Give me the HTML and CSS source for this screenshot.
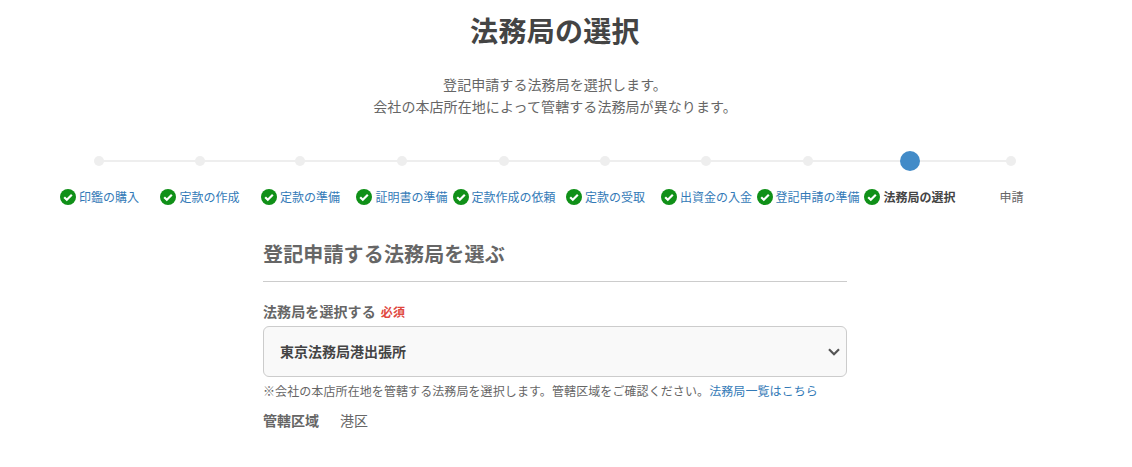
FILE: index.html
```html
<!DOCTYPE html>
<html lang="ja">
<head>
    <meta charset="UTF-8">
    <meta name="viewport" content="width=device-width, initial-scale=1.0">
    <title>法務局の選択</title>
    <link rel="stylesheet" href="styles.css">
</head>
<body>
    <main class="page">
        <h1 class="page-title">法務局の選択</h1>
        <p class="page-lead">登記申請する法務局を選択します。<br>会社の本店所在地によって管轄する法務局が異なります。</p>

        <ol class="steps">
            <li class="step done"><span class="dot"></span><a class="step-label" href="#"><svg class="check" viewBox="0 0 16 16"><circle cx="8" cy="8" r="8"/><path d="M4.2 8.3l2.6 2.5 5-5"/></svg>印鑑の購入</a></li>
            <li class="step done"><span class="dot"></span><a class="step-label" href="#"><svg class="check" viewBox="0 0 16 16"><circle cx="8" cy="8" r="8"/><path d="M4.2 8.3l2.6 2.5 5-5"/></svg>定款の作成</a></li>
            <li class="step done"><span class="dot"></span><a class="step-label" href="#"><svg class="check" viewBox="0 0 16 16"><circle cx="8" cy="8" r="8"/><path d="M4.2 8.3l2.6 2.5 5-5"/></svg>定款の準備</a></li>
            <li class="step done"><span class="dot"></span><a class="step-label" href="#"><svg class="check" viewBox="0 0 16 16"><circle cx="8" cy="8" r="8"/><path d="M4.2 8.3l2.6 2.5 5-5"/></svg>証明書の準備</a></li>
            <li class="step done"><span class="dot"></span><a class="step-label" href="#"><svg class="check" viewBox="0 0 16 16"><circle cx="8" cy="8" r="8"/><path d="M4.2 8.3l2.6 2.5 5-5"/></svg>定款作成の依頼</a></li>
            <li class="step done"><span class="dot"></span><a class="step-label" href="#"><svg class="check" viewBox="0 0 16 16"><circle cx="8" cy="8" r="8"/><path d="M4.2 8.3l2.6 2.5 5-5"/></svg>定款の受取</a></li>
            <li class="step done"><span class="dot"></span><a class="step-label" href="#"><svg class="check" viewBox="0 0 16 16"><circle cx="8" cy="8" r="8"/><path d="M4.2 8.3l2.6 2.5 5-5"/></svg>出資金の入金</a></li>
            <li class="step done"><span class="dot"></span><a class="step-label" href="#"><svg class="check" viewBox="0 0 16 16"><circle cx="8" cy="8" r="8"/><path d="M4.2 8.3l2.6 2.5 5-5"/></svg>登記申請の準備</a></li>
            <li class="step current"><span class="dot"></span><span class="step-label"><svg class="check" viewBox="0 0 16 16"><circle cx="8" cy="8" r="8"/><path d="M4.2 8.3l2.6 2.5 5-5"/></svg>法務局の選択</span></li>
            <li class="step"><span class="dot"></span><span class="step-label">申請</span></li>
        </ol>

        <section class="office-form">
            <h2 class="form-title">登記申請する法務局を選ぶ</h2>
            <div class="form-group">
                <label class="form-label" for="office">法務局を選択する<span class="required">必須</span></label>
                <div class="select-wrap">
                    <select id="office">
                        <option>東京法務局港出張所</option>
                    </select>
                    <svg class="chevron" viewBox="0 0 12 8"><path d="M1 1.2l5 5 5-5"/></svg>
                </div>
                <p class="note">※会社の本店所在地を管轄する法務局を選択します。管轄区域をご確認ください。<a href="#">法務局一覧はこちら</a></p>
            </div>
            <dl class="area">
                <dt>管轄区域</dt>
                <dd>港区</dd>
            </dl>
        </section>
    </main>
</body>
</html>
```

FILE: styles.css
```css
body {
    margin: 0;
    background-color: #fff;
    color: #666;
    font-family: "Noto Sans CJK JP", "Noto Sans", sans-serif;
    font-size: 14px;
}
a {
    color: #337ab7;
    text-decoration: none;
}
.page {
    width: 1110px;
    padding-top: 9px;
}
.page-title {
    margin: 0;
    color: #444;
    font-size: 28px;
    letter-spacing: 0.3px;
    line-height: 42px;
    text-align: center;
}
.page-lead {
    margin: 22px 0 0;
    letter-spacing: 0.08px;
    line-height: 22px;
    text-align: center;
}
.steps {
    display: grid;
    grid-template-columns: 101px 100px 101px 102px 102px 101px 101px 102px 102px 101px;
    justify-content: center;
    margin: 33px 0 0;
    padding: 0;
    list-style: none;
}
.step {
    position: relative;
    display: flex;
    flex-direction: column;
    align-items: center;
}
.step::before {
    content: "";
    position: absolute;
    top: 10px;
    left: 50%;
    width: 100%;
    height: 2px;
    background-color: #eee;
}
.step:last-child::before {
    display: none;
}
.dot {
    position: relative;
    width: 10px;
    height: 10px;
    margin: 6px 0;
    border-radius: 50%;
    background-color: #eee;
}
.current .dot {
    width: 20px;
    height: 20px;
    margin: 1px 0;
    background-color: #428bc8;
}
.step-label {
    display: flex;
    align-items: center;
    margin-top: 16px;
    margin-left: 1px;
    font-size: 12px;
    line-height: 18px;
    white-space: nowrap;
}
.current .step-label {
    color: #444;
    font-weight: bold;
}
.check {
    flex: none;
    width: 16px;
    height: 16px;
    margin-right: 3px;
}
.check circle {
    fill: #109018;
}
.check path {
    fill: none;
    stroke: #fff;
    stroke-width: 2.2;
}
.office-form {
    width: 584px;
    margin: 33px auto 0;
}
.form-title {
    margin: 0;
    padding-bottom: 12px;
    border-bottom: 1px solid #ccc;
    font-size: 20px;
    letter-spacing: 0.15px;
    line-height: 30px;
}
.form-group {
    margin-top: 19px;
}
.form-label {
    display: block;
    margin-bottom: 4px;
    font-weight: bold;
    letter-spacing: 0.1px;
    line-height: 20px;
}
.required {
    margin-left: 5px;
    color: #e0483e;
    font-size: 12px;
}
.select-wrap {
    position: relative;
}
select {
    display: block;
    width: 100%;
    height: 51px;
    padding: 0 16px 2px;
    border: 1px solid #ccc;
    border-radius: 6px;
    background-color: #f9f9f9;
    color: #444;
    font-family: inherit;
    font-size: 14px;
    font-weight: bold;
    appearance: none;
}
.chevron {
    position: absolute;
    top: 22px;
    right: 7px;
    width: 12px;
    height: 8px;
}
.chevron path {
    fill: none;
    stroke: #555;
    stroke-width: 2.2;
}
.note {
    margin: 5px 0 0;
    font-size: 12px;
    letter-spacing: 0.09px;
    line-height: 18px;
}
.area {
    display: flex;
    margin: 10px 0 0;
    line-height: 20px;
}
.area dt {
    width: 77px;
    font-weight: bold;
}
.area dd {
    margin: 0;
}
```
